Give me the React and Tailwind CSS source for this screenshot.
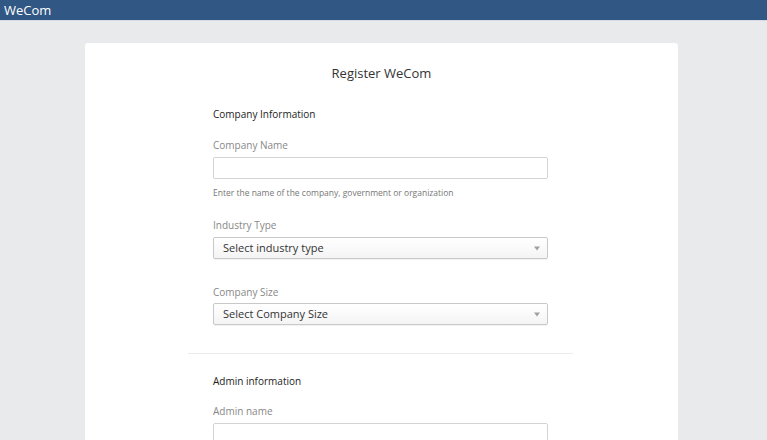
import React from "react";

function Caret() {
  return (
    <svg width="6" height="5" viewBox="0 0 6 5" className="shrink-0">
      <path d="M0 0.5 L6 0.5 L3 4.5 Z" fill="#a0a0a0" />
    </svg>
  );
}

function Select({ text }) {
  return (
    <div className="flex h-[22px] w-[335px] items-center justify-between rounded-[2px] border border-[#c9c9c9] bg-gradient-to-b from-[#ffffff] to-[#f4f4f4] pl-[9px] pr-[7px] shadow-[0_1px_1px_rgba(0,0,0,0.06)]">
      <span className="text-[11px] text-[#333]">{text}</span>
      <Caret />
    </div>
  );
}

function Input() {
  return <div className="h-[22px] w-[335px] rounded-[2px] border border-[#d4d4d4] bg-white" />;
}

export default function App() {
  return (
    <div
      className="h-[440px] w-[767px] overflow-hidden bg-[#e9eaec]"
      style={{ fontFamily: '"Open Sans", "Noto Sans", sans-serif' }}
    >
      <div className="flex h-[21px] items-center border-b border-[#d6dbe3] bg-[#315785] pl-[4px]">
        <span className="text-[13px] leading-none text-white">WeCom</span>
      </div>
      <div className="ml-[85px] mt-[22px] h-[420px] w-[593px] rounded-t-[3px] bg-white">
        <div className="pt-[21px] text-center text-[13px] leading-[18px] text-[#333]">Register WeCom</div>
        <div className="ml-[128px] mt-[25px]">
          <div className="text-[10px] leading-[14px] text-[#222]">Company Information</div>
          <div className="mt-[17px] text-[10px] leading-[14px] text-[#888]">Company Name</div>
          <div className="mt-[5px]"><Input /></div>
          <div className="mt-[8px] text-[8.5px] leading-[12px] text-[#777]">Enter the name of the company, government or organization</div>
          <div className="mt-[19px] text-[10px] leading-[14px] text-[#888]">Industry Type</div>
          <div className="mt-[5px]"><Select text="Select industry type" /></div>
          <div className="mt-[26px] text-[10px] leading-[14px] text-[#888]">Company Size</div>
          <div className="mt-[4px]"><Select text="Select Company Size" /></div>
        </div>
        <div className="ml-[103px] mt-[28px] h-px w-[385px] bg-[#ececec]" />
        <div className="ml-[128px] mt-[20px]">
          <div className="text-[10px] leading-[14px] text-[#222]">Admin information</div>
          <div className="mt-[16px] text-[10px] leading-[14px] text-[#888]">Admin name</div>
          <div className="mt-[5px]"><Input /></div>
        </div>
      </div>
    </div>
  );
}
